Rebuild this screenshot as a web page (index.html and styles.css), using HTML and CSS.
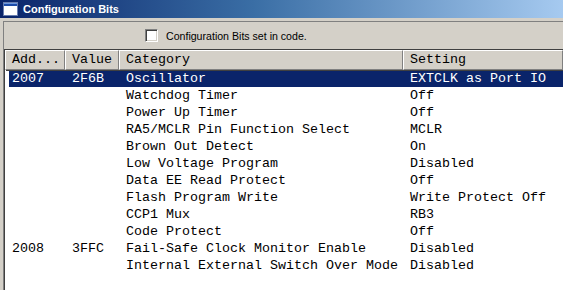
FILE: index.html
```html
<!DOCTYPE html>
<html lang="en">
<head>
  <meta charset="UTF-8" />
  <title>Configuration Bits</title>
  <link rel="stylesheet" href="styles.css">
</head>
<body>
  <div class="window">
    <div class="titlebar">
      <svg class="title-icon" width="15" height="14" viewBox="0 0 15 14">
        <rect x="0.5" y="0.5" width="14" height="13" fill="#ffffff" stroke="#6a7fb0" />
        <rect x="1" y="1" width="13" height="3" fill="#1c4ba8" />
        <rect x="1" y="1" width="13" height="1" fill="#6c98e0" />
      </svg>
      <span class="title-text">Configuration Bits</span>
    </div>

    <div class="client">
      <div class="toolbar">
        <span class="checkbox"></span>
        <span class="check-label">Configuration Bits set in code.</span>
      </div>

      <div class="list">
        <div class="row header">
          <div class="cell">Add...</div>
          <div class="cell">Value</div>
          <div class="cell">Category</div>
          <div class="cell">Setting</div>
        </div>

        <div class="row selected">
          <div class="cell">2007</div>
          <div class="cell">2F6B</div>
          <div class="cell">Oscillator</div>
          <div class="cell">EXTCLK as Port IO</div>
        </div>
        <div class="row">
          <div class="cell"></div>
          <div class="cell"></div>
          <div class="cell">Watchdog Timer</div>
          <div class="cell">Off</div>
        </div>
        <div class="row">
          <div class="cell"></div>
          <div class="cell"></div>
          <div class="cell">Power Up Timer</div>
          <div class="cell">Off</div>
        </div>
        <div class="row">
          <div class="cell"></div>
          <div class="cell"></div>
          <div class="cell">RA5/MCLR Pin Function Select</div>
          <div class="cell">MCLR</div>
        </div>
        <div class="row">
          <div class="cell"></div>
          <div class="cell"></div>
          <div class="cell">Brown Out Detect</div>
          <div class="cell">On</div>
        </div>
        <div class="row">
          <div class="cell"></div>
          <div class="cell"></div>
          <div class="cell">Low Voltage Program</div>
          <div class="cell">Disabled</div>
        </div>
        <div class="row">
          <div class="cell"></div>
          <div class="cell"></div>
          <div class="cell">Data EE Read Protect</div>
          <div class="cell">Off</div>
        </div>
        <div class="row">
          <div class="cell"></div>
          <div class="cell"></div>
          <div class="cell">Flash Program Write</div>
          <div class="cell">Write Protect Off</div>
        </div>
        <div class="row">
          <div class="cell"></div>
          <div class="cell"></div>
          <div class="cell">CCP1 Mux</div>
          <div class="cell">RB3</div>
        </div>
        <div class="row">
          <div class="cell"></div>
          <div class="cell"></div>
          <div class="cell">Code Protect</div>
          <div class="cell">Off</div>
        </div>
        <div class="row">
          <div class="cell">2008</div>
          <div class="cell">3FFC</div>
          <div class="cell">Fail-Safe Clock Monitor Enable</div>
          <div class="cell">Disabled</div>
        </div>
        <div class="row">
          <div class="cell"></div>
          <div class="cell"></div>
          <div class="cell">Internal External Switch Over Mode</div>
          <div class="cell">Disabled</div>
        </div>
      </div>
    </div>
  </div>
</body>
</html>
```

FILE: styles.css
```css
body {
  margin: 0;
  background: #d4d0c8;
  overflow: hidden;
}

.window {
  width: 563px;
  height: 290px;
  background: #d4d0c8;
  display: flex;
  flex-direction: column;
}

.titlebar {
  height: 18px;
  display: flex;
  align-items: center;
  gap: 5px;
  padding-left: 3px;
  background: linear-gradient(to right, #0a246a 0%, #3a6ea5 45%, #a6caf0 100%);
  color: #fff;
  font-family: 'Liberation Sans', Arial, sans-serif;
  font-weight: bold;
  font-size: 11px;
}

.title-icon {
  display: block;
}

.client {
  flex: 1;
  margin: 3px 0 0 3px;
  border-left: 1px solid #808080;
  border-top: 1px solid #808080;
  display: flex;
  flex-direction: column;
}

.toolbar {
  height: 27px;
  display: flex;
  align-items: center;
  padding-left: 141px;
  font-family: 'Liberation Sans', Arial, sans-serif;
  font-size: 10.6px;
  color: #000;
}

.checkbox {
  width: 9px;
  height: 9px;
  background: #fff;
  border-top: 1px solid #808080;
  border-left: 1px solid #808080;
  border-right: 1px solid #fff;
  border-bottom: 1px solid #fff;
  box-shadow: inset 1px 1px 0 #404040, inset -1px -1px 0 #d4d0c8;
  padding: 1px;
}

.check-label {
  margin-left: 8px;
}

.list {
  flex: 1;
  background: #fff;
  border-top: 1px solid #404040;
  border-left: 1px solid #404040;
  font-family: 'Liberation Mono', 'Courier New', monospace;
  font-size: 13.33px;
  color: #000;
}

.row {
  display: grid;
  grid-template-columns: 60px 54px 284px 1fr;
  height: 17px;
  align-items: center;
}

.cell {
  padding-left: 7px;
  white-space: nowrap;
  overflow: hidden;
}

.row.header {
  height: 20px;
  background: #d4d0c8;
}

.row.header .cell {
  height: 20px;
  box-sizing: border-box;
  line-height: 18px;
  border-top: 1px solid #fff;
  border-left: 1px solid #fff;
  border-right: 1px solid #808080;
  border-bottom: 1px solid #808080;
  box-shadow: 1px 1px 0 #404040;
  padding-left: 6px;
}

.row.selected {
  background: linear-gradient(to right, transparent 4px, #0a246a 4px);
  color: #fff;
}
```
